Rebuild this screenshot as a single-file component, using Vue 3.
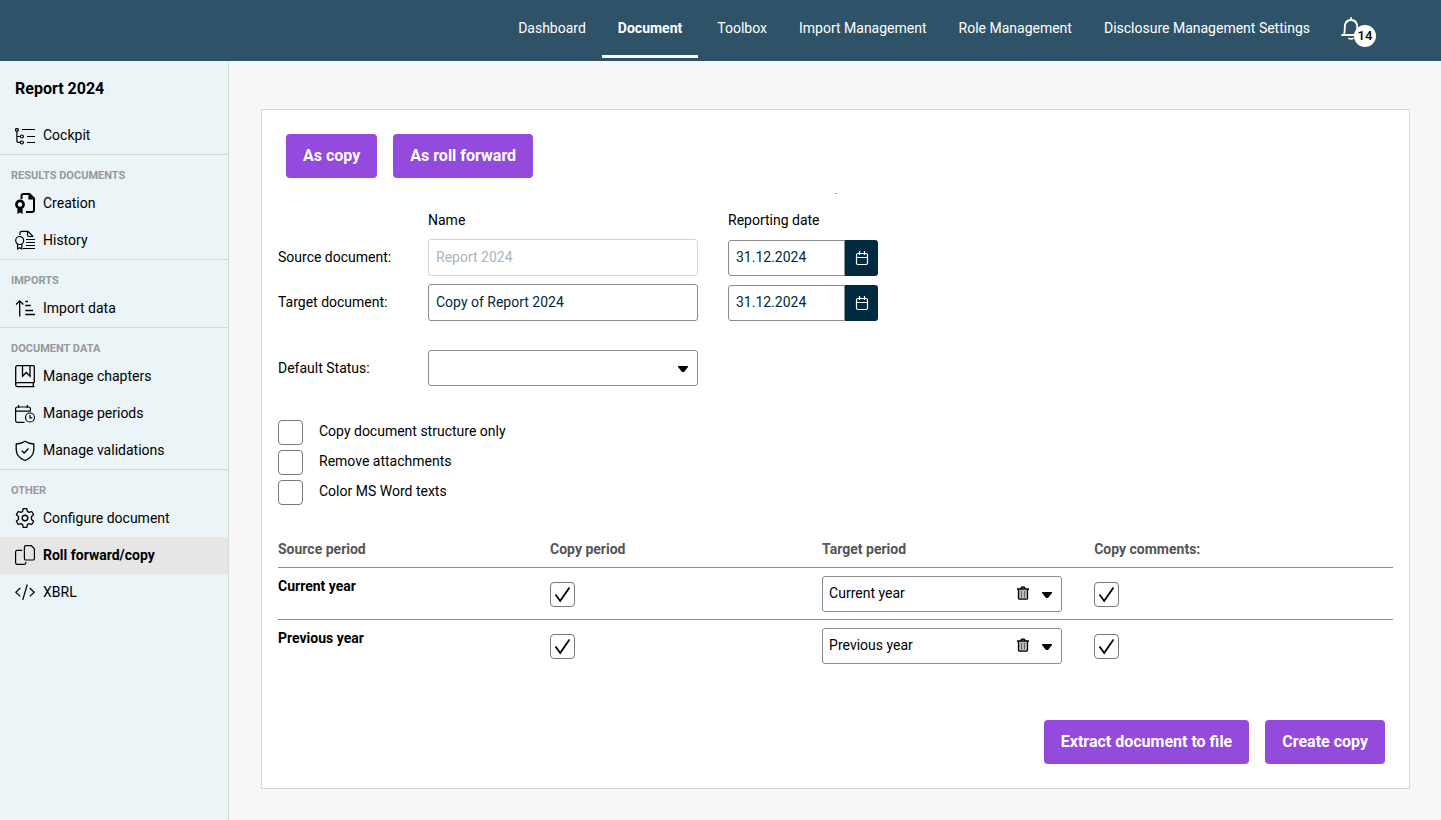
<template>
	<div class="page">
		<header class="topbar">
			<nav class="topnav">
				<a
					v-for="item in navItems"
					:key="item"
					href="#"
					class="topnav-link"
					:class="{ active: item === activeNav }"
					@click.prevent="activeNav = item"
					>{{ item }}</a
				>
			</nav>
			<button type="button" class="bell" aria-label="Notifications">
				<svg class="bell-icon" viewBox="0 0 20 23">
					<path d="M1 18h18M3 17.500c.8-2 .8-4 .8-7C3.800 6 6 3 10 3s6.200 3 6.200 7.500c0 3 0 5 .8 7M10 3V1M8 21.500q2 .8 4 0" />
				</svg>
				<span class="badge">14</span>
			</button>
		</header>

		<div class="body">
			<aside class="sidebar">
				<h1 class="sidebar-title">Report 2024</h1>
				<div v-for="group in menu" :key="group.title" class="menu-group">
					<h2 v-if="group.title" class="menu-heading">{{ group.title }}</h2>
					<a
						v-for="item in group.items"
						:key="item.label"
						href="#"
						class="menu-item"
						:class="{ active: item.label === activeItem }"
						@click.prevent="activeItem = item.label"
					>
						<svg class="menu-icon" viewBox="0 0 20 23" v-html="icons[item.icon]"></svg>
						<span class="menu-text">{{ item.label }}</span>
					</a>
				</div>
			</aside>

			<main class="main">
				<section class="card">
					<div class="actions">
						<button type="button" class="btn">As copy</button>
						<button type="button" class="btn">As roll forward</button>
					</div>
					<div class="loader"></div>

					<!-- Documents -->
					<div class="form-grid">
						<span></span>
						<span class="col-label">Name</span>
						<span class="col-label">Reporting date</span>
						<template v-for="doc in documents" :key="doc.id">
							<label :for="doc.id">{{ doc.label }}</label>
							<input :id="doc.id" v-model="doc.name" type="text" class="field" :disabled="doc.disabled" />
							<div class="date">
								<input v-model="doc.date" type="text" class="field date-field" :aria-label="doc.label + ' reporting date'" />
								<button type="button" class="date-btn" aria-label="Open calendar">
									<svg viewBox="0 0 14 16">
										<rect x="1.500" y="3.500" width="11" height="11" rx="1.500" />
										<path d="M1.500 7.500h11M4.500 1v4M9.500 1v4" />
									</svg>
								</button>
							</div>
						</template>
					</div>

					<div class="form-grid status">
						<label for="status">Default Status:</label>
						<div class="select-wrap">
							<select id="status" v-model="status" class="field">
								<option value=""></option>
								<option>In progress</option>
								<option>Done</option>
							</select>
							<svg class="caret" viewBox="0 0 10 6"><path d="M0 0h10v1L6 6H4L0 1z" /></svg>
						</div>
					</div>

					<div class="options">
						<label v-for="opt in options" :key="opt.label" class="option">
							<span class="check">
								<input v-model="opt.checked" type="checkbox" />
								<svg viewBox="0 0 25 25"><path d="M5.500 12.500l4.700 6.500L19.500 5.500" /></svg>
							</span>
							<span class="option-text">{{ opt.label }}</span>
						</label>
					</div>

					<!-- Periods -->
					<table class="periods">
						<thead>
							<tr>
								<th>Source period</th>
								<th>Copy period</th>
								<th>Target period</th>
								<th>Copy comments:</th>
							</tr>
						</thead>
						<tbody>
							<tr v-for="row in periods" :key="row.source">
								<td class="source">{{ row.source }}</td>
								<td>
									<span class="check">
										<input v-model="row.copy" type="checkbox" :aria-label="'Copy period ' + row.source" />
										<svg viewBox="0 0 25 25"><path d="M5.500 12.500l4.700 6.500L19.500 5.500" /></svg>
									</span>
								</td>
								<td>
									<div class="select-wrap target">
										<select v-model="row.target" class="field" :aria-label="'Target period for ' + row.source">
											<option>Current year</option>
											<option>Previous year</option>
										</select>
										<button type="button" class="clear" aria-label="Clear" @click="row.target = ''">
											<svg viewBox="0 0 12 14">
												<path class="fill" d="M2 3.500h8V13H2z" />
												<path d="M0 3h12M4 2.500Q4 1 6 1t2 1.500M1.500 3.500V12q0 1.200 1.200 1.200h6.600q1.200 0 1.200-1.200V3.500" />
												<path class="thin" d="M4.500 5v6.500M7.500 5v6.500" />
											</svg>
										</button>
										<svg class="caret" viewBox="0 0 10 6"><path d="M0 0h10v1L6 6H4L0 1z" /></svg>
									</div>
								</td>
								<td>
									<span class="check">
										<input v-model="row.comments" type="checkbox" :aria-label="'Copy comments ' + row.source" />
										<svg viewBox="0 0 25 25"><path d="M5.500 12.500l4.700 6.500L19.500 5.500" /></svg>
									</span>
								</td>
							</tr>
						</tbody>
					</table>

					<div class="actions footer">
						<button type="button" class="btn">Extract document to file</button>
						<button type="button" class="btn">Create copy</button>
					</div>
				</section>
			</main>
		</div>
	</div>
</template>

<script setup>
import { reactive, ref } from "vue";

const navItems = [
	"Dashboard",
	"Document",
	"Toolbox",
	"Import Management",
	"Role Management",
	"Disclosure Management Settings",
];
const activeNav = ref("Document");
const activeItem = ref("Roll forward/copy");

const menu = [
	{ title: "", items: [{ label: "Cockpit", icon: "tree" }] },
	{
		title: "Results documents",
		items: [
			{ label: "Creation", icon: "creation" },
			{ label: "History", icon: "history" },
		],
	},
	{ title: "Imports", items: [{ label: "Import data", icon: "sort" }] },
	{
		title: "Document data",
		items: [
			{ label: "Manage chapters", icon: "book" },
			{ label: "Manage periods", icon: "period" },
			{ label: "Manage validations", icon: "shield" },
		],
	},
	{
		title: "Other",
		items: [
			{ label: "Configure document", icon: "gear" },
			{ label: "Roll forward/copy", icon: "copy" },
			{ label: "XBRL", icon: "code" },
		],
	},
];

const icons = {
	tree: '<rect x=".6" y="4.600" width="2.600" height="2.600" rx=".8"/><path d="M1.900 7.200V17q0 1.300 1.300 1.300h2M1.900 12.500h3.300M7 5.500h13M12 12.500h8M12 18.500h8"/><circle cx="6.900" cy="12.500" r="1.500"/><circle cx="6.900" cy="18.500" r="1.500"/>',
	creation:
		'<path stroke-width="2" d="M6.500 7V4q0-2 2-2h6L19 6.500V18q0 2-2 2h-6"/><path fill="currentColor" d="M14 2v5h5z"/><circle cx="5" cy="12.500" r="3.600" stroke-width="2.600"/><path fill="currentColor" d="M3 17h4v4l-2-1.200L3 21z"/>',
	history:
		'<path d="M5 6V4q0-1.700 1.700-1.700H13l5 5.200M12.500 2.500V6q0 1.500 1.500 1.500h4"/><path d="M11 10.500h9M11 13.500h9M11 16.500h9M10 19.500h10"/><circle cx="4.700" cy="11.500" r="4"/><path d="M2.600 15v5l2.100-1.300L6.800 20v-5M8 19.500h2"/>',
	sort: '<path stroke-width="1.300" d="M4.700 19.500V4M1 7.500l3.700-3.700L8.400 7.500M10.300 4.500h2.700M10.300 8.500h5.400M10.300 13.500H18M10.300 17.500H20"/>',
	book: '<path stroke-width="1.300" d="M19.300 17.700V2q0-1.300-1.300-1.300H2.500Q.7.700.7 2.500V20q0 1.700 1.700 1.700h17M.7 19.500q0-1.800 1.700-1.800h17M18.300 17.700v4M7.500.7v10.500l3.800-3.700 3.700 3.700V.7"/>',
	period:
		'<path d="M9.500 20.300H2.300Q.6 20.300.6 18.600V6.700Q.6 5 2.300 5h11.400q1.700 0 1.700 1.700v2.500M.6 9.200h14.800M3.600 3v3M12.300 3v3"/><circle cx="15" cy="15.500" r="4.500"/><path d="M15 13v2.800h2.200"/>',
	shield:
		'<path stroke-width="1.300" d="M10 2.200Q13.500 4.700 18.800 5v5.500q0 7.500-8.800 11Q1.200 18 1.200 10.500V5Q6.500 4.700 10 2.200z"/><path stroke-width="1.300" d="M6.700 11.700l2.500 2.300 4.300-4.500"/>',
	gear: '<path stroke-width="1.300" stroke-linejoin="round" d="M8.200 1.700h3.600l.6 2.700 1.700 1 2.600-.9 1.900 3.200-2.100 1.900v2.800l2.100 1.900-1.900 3.200-2.600-.9-1.700 1-.6 2.700H8.200l-.6-2.700-1.700-1-2.600.9-1.900-3.200 2.100-1.900V9.600L1.400 7.700l1.900-3.200 2.600.9 1.700-1z"/><circle cx="10" cy="11" r="2.800" stroke-width="1.400"/>',
	copy: '<path d="M11 1.600h5.300l3.100 3.200v9.600q0 1.600-1.600 1.600H11q-1.600 0-1.600-1.600V3.200q0-1.600 1.600-1.600zM7.200 6.400h-5Q.6 6.400.6 8v10.700q0 1.600 1.600 1.600h7q1.600 0 1.600-1.600v-1"/>',
	code: '<path d="M5.300 7L.8 11.200l4.500 4.200M12.300 3.500L7.700 19M14.700 7l4.500 4.200-4.500 4.200"/>',
};

const documents = reactive([
	{ id: "source-doc", label: "Source document:", name: "Report 2024", date: "31.12.2024", disabled: true },
	{ id: "target-doc", label: "Target document:", name: "Copy of Report 2024", date: "31.12.2024", disabled: false },
]);

const status = ref("");

const options = reactive([
	{ label: "Copy document structure only", checked: false },
	{ label: "Remove attachments", checked: false },
	{ label: "Color MS Word texts", checked: false },
]);

const periods = reactive([
	{ source: "Current year", copy: true, target: "Current year", comments: true },
	{ source: "Previous year", copy: true, target: "Previous year", comments: true },
]);
</script>

<style>
body {
	margin: 0;
}
</style>

<style scoped>
.page {
	display: flex;
	flex-direction: column;
	min-height: 100vh;
	background: #f7f7f7;
	color: #000;
	font: 14px/20px Roboto, "Liberation Sans", sans-serif;
}
* {
	box-sizing: border-box;
}
button,
input,
select {
	font: inherit;
	margin: 0;
}
svg {
	display: block;
	fill: none;
	stroke: currentColor;
}
.topbar {
	display: flex;
	justify-content: flex-end;
	height: 61px;
	padding: 0 65px 3px 0;
	background: #2e5368;
}
.topnav {
	display: flex;
}
.topnav-link {
	padding: 18px 16px 17px;
	border-bottom: 3px solid transparent;
	color: #fff;
	text-decoration: none;
}
.topnav-link.active {
	margin-right: 3px;
	border-color: #fff;
	font-weight: 700;
}
.bell {
	position: relative;
	display: flex;
	align-items: flex-start;
	width: 35px;
	height: 30px;
	margin: 17px 0 0 15px;
	padding: 0;
	border: 0;
	background: none;
	color: #fff;
}
.bell-icon {
	width: 20px;
	height: 23px;
	stroke-width: 1.8;
	stroke-linecap: round;
}
.badge {
	position: absolute;
	right: 0;
	bottom: 0;
	width: 22px;
	height: 22px;
	border-radius: 50%;
	background: #fff;
	color: #000;
	font-size: 13px;
	font-weight: 500;
	line-height: 22px;
	text-align: center;
}
.body {
	display: flex;
	flex: 1;
}
.sidebar {
	flex: 0 0 229px;
	border-right: 1px solid #d7dadb;
	background: #ebf4f7;
}
.sidebar-title {
	margin: 0;
	padding: 18px 15px;
	font-size: 16px;
	font-weight: 700;
	line-height: 20px;
}
.menu-group + .menu-group {
	border-top: 1px solid #d4d8da;
}
.menu-heading {
	margin: 0;
	padding: 14px 11px 2px;
	color: #999;
	font-size: 11px;
	font-weight: 700;
	line-height: 14px;
	text-transform: uppercase;
}
.menu-item {
	display: flex;
	align-items: center;
	gap: 8px;
	height: 37px;
	padding: 0 15px;
	color: #000;
	text-decoration: none;
}
.menu-item.active {
	background: #e6e6e6;
	font-weight: 700;
}
.menu-text {
	padding-bottom: 2px;
}
.menu-icon {
	width: 20px;
	height: 23px;
	overflow: visible;
	stroke-width: 1.2;
}
.main {
	flex: 1;
	min-width: 0;
	padding: 48px 31px 31px 32px;
}
.card {
	padding: 24px 16px;
	border: 1px solid #d8d8d8;
	background: #fff;
}
.actions {
	display: flex;
	gap: 16px;
	padding: 0 8px;
}
.btn {
	height: 44px;
	padding: 0 17px;
	border: 0;
	border-radius: 4px;
	background: #944adc;
	color: #fff;
	font-size: 16px;
	font-weight: 700;
}
.loader {
	width: 2px;
	height: 1px;
	margin: 15px auto 16px;
	background: #999;
}
.form-grid {
	display: grid;
	grid-template-columns: 150px 270px 150px;
	column-gap: 0;
	row-gap: 8px;
	align-items: center;
}
.form-grid > :nth-child(3n) {
	margin-left: 30px;
	width: 150px;
}
.form-grid > label {
	padding-bottom: 1px;
}
.col-label {
	line-height: 21px;
}
.field {
	width: 100%;
	height: 37px;
	padding: 0 7px 2px;
	border: 1px solid #8c8c8c;
	border-radius: 3px;
	background: #fff;
	color: #002a40;
}
.field:disabled {
	border-color: #d4d4d4;
	color: #aab5bc;
}
.date {
	display: flex;
	align-self: end;
}
.date-field {
	width: 117px;
	height: 36px;
	border-radius: 3px 0 0 3px;
}
.date-btn {
	display: flex;
	align-items: center;
	justify-content: center;
	width: 33px;
	height: 36px;
	padding: 0;
	border: 0;
	border-radius: 0 3px 3px 0;
	background: #002a40;
	color: #fff;
}
.date-btn svg {
	width: 14px;
	height: 16px;
	stroke-width: 1.2;
}
.status {
	margin-top: 29px;
}
.select-wrap {
	position: relative;
}
.select-wrap .field {
	display: block;
	height: 36px;
	appearance: none;
	color: #000;
}
.caret {
	position: absolute;
	top: 16px;
	right: 10px;
	width: 10px;
	height: 6px;
	fill: #000;
	stroke: none;
	pointer-events: none;
}
.options {
	display: flex;
	flex-direction: column;
	align-items: flex-start;
	gap: 5px;
	margin-top: 34px;
}
.option {
	display: flex;
	gap: 16px;
}
.option-text {
	line-height: 22px;
}
.check {
	position: relative;
	display: block;
	width: 25px;
	height: 25px;
}
.check input {
	display: block;
	width: 25px;
	height: 25px;
	appearance: none;
	border: 1px solid #777;
	border-radius: 4px;
	background: #fff;
}
.check svg {
	position: absolute;
	inset: 0;
	display: none;
	stroke: #000;
	stroke-width: 1.8;
	pointer-events: none;
}
.check input:checked + svg {
	display: block;
}
.periods {
	width: 100%;
	margin-top: 33px;
	border-collapse: separate;
	border-spacing: 0;
	table-layout: fixed;
}
.periods th {
	width: 24.4%;
	height: 30px;
	padding: 1px 0 8px;
	border-bottom: 1px solid #8c8c8c;
	color: #555;
	font-weight: 700;
	text-align: left;
}
.periods th:last-child {
	width: auto;
}
.periods td {
	height: 52px;
	padding: 8px 0 7px;
	vertical-align: top;
}
.periods td .check {
	margin-top: 6px;
}
.periods tr:not(:last-child) td {
	border-bottom: 1px solid #8c8c8c;
}
.periods .source {
	font-weight: 700;
}
.target {
	width: 240px;
}
.target .field {
	padding: 0 60px 2px 6px;
}
.clear {
	position: absolute;
	top: 10px;
	right: 33px;
	padding: 0;
	border: 0;
	background: none;
	color: #000;
}
.clear svg {
	width: 12px;
	height: 14px;
	stroke-width: 1.3;
}
.clear .fill {
	fill: #bbb;
	stroke: none;
}
.clear .thin {
	stroke: #666;
	stroke-width: 1;
}
.footer {
	justify-content: flex-end;
	margin-top: 48px;
}
</style>
